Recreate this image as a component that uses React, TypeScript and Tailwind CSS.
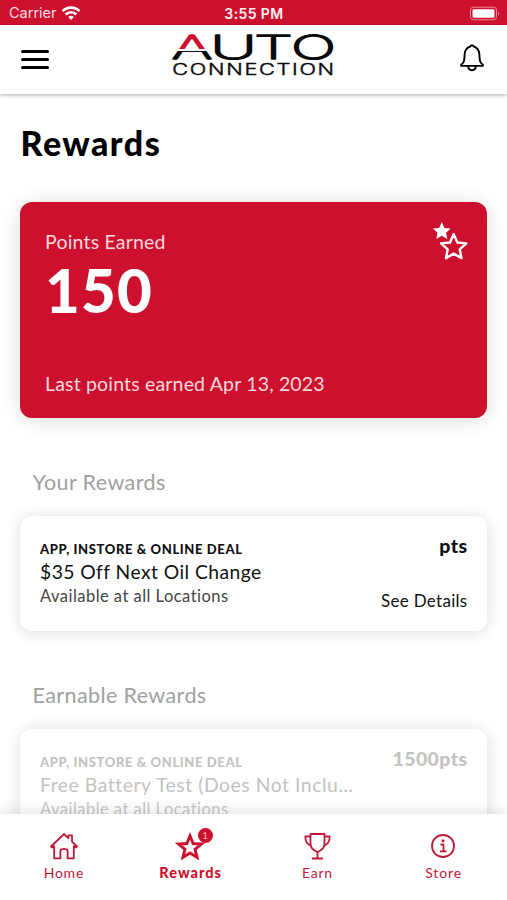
import React from "react";

function StatusBar() {
  return (
    <div className="flex h-[25px] items-center justify-between bg-[#cd102d] pl-[9px] pr-[7px] text-white">
      <div className="flex w-[120px] items-center gap-[6px] pt-[2px]">
        <span className="font-[Inter,sans-serif] text-[14.5px] leading-none text-[#fbdde2]">Carrier</span>
        <svg className="-translate-x-[1.5px]" width="19" height="15" viewBox="0 0 19 15" fill="none" stroke="white" strokeWidth="2.6">
          <path d="M1 5.2a12 12 0 0 1 17 0" />
          <path d="M4.2 8.500a7.5 7.5 0 0 1 10.6 0" />
          <path d="M6.7 11a3.900 3.900 0 0 1 5.600 0L9.5 14z" fill="white" stroke="none" />
        </svg>
      </div>
      <span className="pt-[3px] pr-[1px] font-[Inter,sans-serif] text-[14px] font-semibold leading-none tracking-[0.4px] text-[#fff0f2]">3:55 PM</span>
      <div className="flex w-[120px] justify-end pt-[1px]">
        <svg width="31" height="15" viewBox="0 0 31 15">
          <rect x="1.5" y="1.2" width="26" height="12.6" rx="3" fill="none" stroke="#ee8c9a" />
          <rect x="3.5" y="3.2" width="22" height="8.6" rx="1.4" fill="white" />
          <path d="M29 5.5v4q2-2 0-4z" fill="#ee8c9a" />
        </svg>
      </div>
    </div>
  );
}

function Logo() {
  return (
    <svg className="overflow-visible" width="164" height="50" viewBox="0 0 164 50" fontFamily="Inter, sans-serif">
      <defs>
        <linearGradient id="split" gradientUnits="userSpaceOnUse" x1="0" y1="5" x2="0" y2="30">
          <stop offset="0.62" stopColor="#cd102d" />
          <stop offset="0.62" stopColor="#ffffff" />
          <stop offset="0.68" stopColor="#ffffff" />
          <stop offset="0.68" stopColor="#0a0a0a" />
        </linearGradient>
      </defs>
      <g fontSize="33" fontWeight="200" fill="#0a0a0a" stroke="#0a0a0a" strokeWidth="1.3" strokeLinejoin="round">
        <text x="0.5" y="29.8" textLength="41" lengthAdjust="spacingAndGlyphs" fill="url(#split)" stroke="url(#split)">A</text>
        <text x="39" y="29.8" textLength="47" lengthAdjust="spacingAndGlyphs">U</text>
        <text x="83" y="29.8" textLength="39" lengthAdjust="spacingAndGlyphs">T</text>
        <text x="120" y="29.8" textLength="45" lengthAdjust="spacingAndGlyphs">O</text>
      </g>
      <text x="1.3" y="46.4" fontSize="15.500" fontWeight="300" fill="#0a0a0a" stroke="#0a0a0a" strokeWidth="0.4" textLength="163.500" lengthAdjust="spacingAndGlyphs" letterSpacing="1.2">CONNECTION</text>
    </svg>
  );
}

function Header() {
  return (
    <header className="flex h-[69px] items-start justify-between bg-white pl-[21px] pr-[22px] shadow-[0_2px_3px_rgba(0,0,0,0.22)]">
      <div className="flex w-[50px] flex-col gap-[4.4px] pt-[25px]">
        <span className="h-[3.4px] w-7 rounded-sm bg-black" />
        <span className="h-[3.4px] w-7 rounded-sm bg-black" />
        <span className="h-[3.4px] w-7 rounded-sm bg-black" />
      </div>
      <div className="pt-1">
        <Logo />
      </div>
      <div className="flex w-[50px] justify-end pt-[18px]">
        <svg width="26" height="30" viewBox="0 0 26 30" fill="none" stroke="black" strokeWidth="1.9" strokeLinejoin="round">
          <path d="M11.200 3.500q1.800-2.600 3.600 0c3.700 1.200 5.400 4.200 5.600 8 .2 6 .3 7.800 3.400 10.200v1.200H2.200v-1.200c3.100-2.400 3.200-4.200 3.400-10.200.2-3.800 1.900-6.800 5.600-8z" />
          <path d="M9.200 23c0 5.600 7.600 5.600 7.600 0" />
        </svg>
      </div>
    </header>
  );
}

const STAR = "M12 1.8l3.1 6.9 7.4.8-5.500 5 1.500 7.300L12 18l-6.500 3.800L7 14.500l-5.500-5 7.400-.8z";

function PointsCard() {
  return (
    <section className="mx-[20px] flex h-[216px] justify-between rounded-[12px] bg-[#cd102d] pl-[25px] pr-[18px] shadow-[0_2px_20px_rgba(0,0,0,0.14)]">
      <div className="pt-[28px]">
        <div className="text-[19.5px] leading-6 tracking-[0.2px] text-[#fbd9de]">Points Earned</div>
        <div className="mt-[4px] text-[60px] font-black leading-[64px] tracking-[1.2px] text-white">150</div>
        <div className="mt-[50px] text-[19.5px] leading-6 tracking-[0.17px] text-[#fbd9de]">Last points earned Apr 13, 2023</div>
      </div>
      <svg className="mt-[17px] translate-x-px" width="38" height="44" viewBox="0 0 38 44">
        <path d={STAR} fill="white" transform="translate(-0.4 1.500) scale(0.85)" />
        <path d={STAR} fill="#cd102d" stroke="white" strokeWidth="2" strokeLinejoin="round" transform="translate(7.300 13) scale(1.2)" />
      </svg>
    </section>
  );
}

function SectionTitle({ children }: { children: React.ReactNode }) {
  return <h2 className="mt-[50px] pl-[32.500px] text-[21.500px] leading-7 tracking-[0.4px] text-[#a0a0a0]">{children}</h2>;
}

type Reward = { title: string; points: string; details?: boolean; muted?: boolean };

function RewardCard({ title, points, details, muted }: Reward) {
  return (
    <article className={"mx-[20px] flex h-[115px] shrink-0 justify-between rounded-[12px] bg-white px-5 shadow-[0_1px_16px_rgba(0,0,0,0.14)] " + (muted ? "text-[#c2c2c2]" : "text-[#111]")}>
      <div className="whitespace-nowrap pt-[23px]">
        <div className="text-[13px] font-black leading-5 tracking-[0.62px]">APP, INSTORE &amp; ONLINE DEAL</div>
        <div className={"mt-[1px] text-[19.300px] leading-6 " + (muted ? "tracking-[0.57px]" : "tracking-[0.45px]")}>{title}</div>
        <div className={"mt-[2px] text-[16.5px] leading-5 tracking-[0.47px] " + (muted ? "text-[#c8c8c8]" : "text-[#444]")}>Available at all Locations</div>
      </div>
      <div className="pt-[18px] text-right">
        <div className="-mr-[0.5px] text-[19.500px] font-black leading-6 tracking-[0.4px]">{points}</div>
        {details && <div className="-mr-[0.5px] mt-[31px] text-[17px] leading-6 tracking-[0.3px]">See Details</div>}
      </div>
    </article>
  );
}

function Nav() {
  const label = "mt-[2px] pl-px text-[14px] leading-5 tracking-[0.75px]";
  return (
    <nav className="relative grid h-[86px] shrink-0 grid-cols-4 bg-white pt-[17px] text-[#c0193a] shadow-[0_-2px_14px_rgba(0,0,0,0.12)]">
      <div className="flex flex-col items-center">
        <svg className="translate-x-px" width="30" height="30" viewBox="0 0 30 30" fill="none" stroke="currentColor" strokeWidth="1.8" strokeLinejoin="round">
          <path d="M2 15.500L15 3l4.400 4.200V4.300h3.600v6.300L28 15.500l-1.200 1.100-2-1.500v12.300h-6.200v-7.200q0-2-2-2h-3.200q-2 0-2 2v7.200H5.200V15.100l-2 1.500z" />
        </svg>
        <div className={label}>Home</div>
      </div>
      <div className="flex flex-col items-center text-[#cd102d]">
        <div className="relative">
          <svg width="30" height="30" viewBox="0 0 30 30" fill="none" stroke="currentColor" strokeWidth="2.900" strokeLinejoin="miter">
            <path d="M15 4.800l3.100 7.700 8.300.5-6.400 5.300 2.100 8.100L15 22l-7.100 4.400 2.100-8.100-6.400-5.300 8.300-.5z" />
          </svg>
          <span className="absolute -top-[3.500px] left-[22.500px] flex size-[15px] items-center justify-center rounded-full bg-[#cd102d] text-[9px] leading-none text-[#f6c3ca]">1</span>
        </div>
        <div className="mt-[2px] pl-px text-[14.500px] font-black leading-5 tracking-[1px]">Rewards</div>
      </div>
      <div className="flex flex-col items-center">
        <svg className="translate-x-px" width="30" height="30" viewBox="0 0 30 30" fill="none" stroke="currentColor" strokeWidth="1.800" strokeLinejoin="round">
          <path d="M7.500 3h14v9.500c0 4.500-3 7-7 8.500-4-1.500-7-4-7-8.500z" />
          <path d="M7.500 5.500H2.300c0 5 1.700 8 5.900 9M21.500 5.500h5.200c0 5-1.700 8-5.900 9" />
          <path d="M14.500 20.500v6.500M9 27.500h11" />
        </svg>
        <div className={label}>Earn</div>
      </div>
      <div className="flex flex-col items-center">
        <svg className="-translate-x-px" width="30" height="30" viewBox="0 0 30 30" fill="none" stroke="currentColor" strokeWidth="1.800">
          <circle cx="15" cy="15" r="11" />
          <path d="M12.500 13.500h3v6.500M12 20.400h6.500" />
          <circle cx="15" cy="9.700" r="1.500" fill="currentColor" stroke="none" />
        </svg>
        <div className="mt-[2px] text-[14px] leading-5 tracking-[0.9px]">Store</div>
      </div>
    </nav>
  );
}

export default function App() {
  return (
    <div className="flex h-[900px] w-[507px] flex-col overflow-hidden bg-white font-[Lato,sans-serif] [font-variant-ligatures:none]">
      <StatusBar />
      <Header />
      <main className="min-h-0 flex-1 overflow-hidden pt-[28px]">
        <h1 className="mb-[38px] pl-[20.500px] text-[34px] font-black leading-[42px] tracking-[1.450px] text-black">Rewards</h1>
        <PointsCard />
        <SectionTitle>Your Rewards</SectionTitle>
        <div className="mt-[20px]">
          <RewardCard title="$35 Off Next Oil Change" points="pts" details />
        </div>
        <SectionTitle>Earnable Rewards</SectionTitle>
        <div className="mt-[20px]">
          <RewardCard title="Free Battery Test (Does Not Inclu…" points="1500pts" muted />
        </div>
      </main>
      <Nav />
    </div>
  );
}
